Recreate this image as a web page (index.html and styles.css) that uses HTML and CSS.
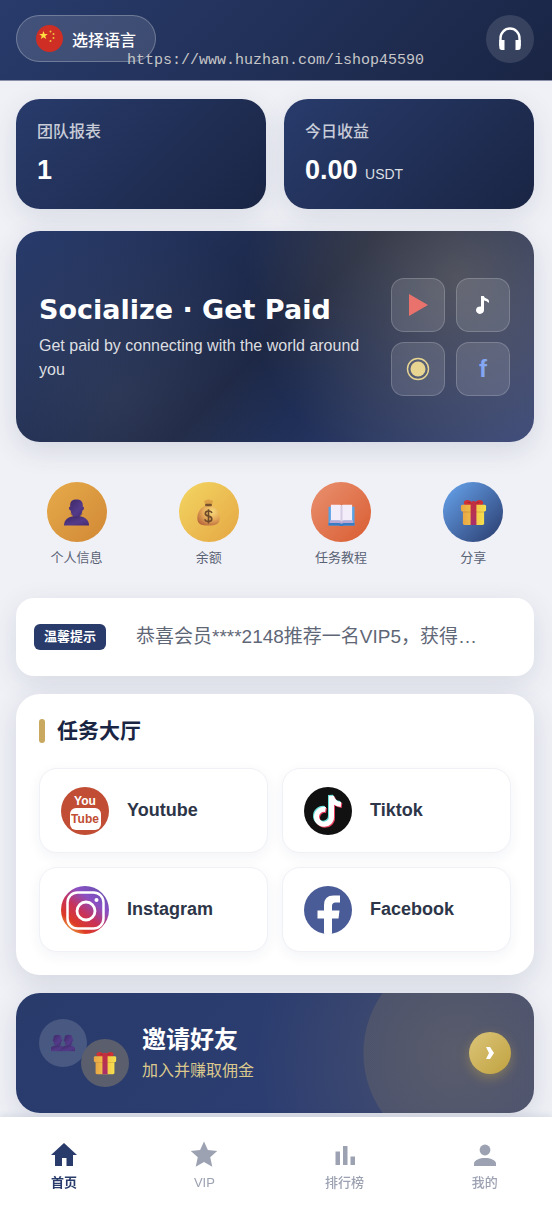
FILE: index.html
```html
<!DOCTYPE html>
<html lang="zh-CN">
<head>
<meta charset="utf-8">
<meta name="viewport" content="width=device-width, initial-scale=1">
<title>首页</title>
<link rel="stylesheet" href="styles.css">
</head>
<body>
	<!-- shared emoji and gradients -->
	<svg class="defs" width="0" height="0" aria-hidden="true">
		<defs>
			<linearGradient id="purple" x1="0" y1="0" x2="1" y2="1">
				<stop offset="0" stop-color="#3d2766"/>
				<stop offset="0.6" stop-color="#543b8a"/>
				<stop offset="1" stop-color="#432a70"/>
			</linearGradient>
			<linearGradient id="box" x1="0" y1="0" x2="1" y2="0">
				<stop offset="0" stop-color="#e9a545"/>
				<stop offset="1" stop-color="#f6e04d"/>
			</linearGradient>
			<linearGradient id="ribbon" x1="0" y1="0" x2="0" y2="1">
				<stop offset="0" stop-color="#c4303c"/>
				<stop offset="1" stop-color="#a8306b"/>
			</linearGradient>
			<radialGradient id="bag" cx="0.65" cy="0.3" r="0.8">
				<stop offset="0" stop-color="#f8dc7b"/>
				<stop offset="0.5" stop-color="#e6aa58"/>
				<stop offset="1" stop-color="#b7653b"/>
			</radialGradient>
			<linearGradient id="insta" x1="0.1" y1="1" x2="0.8" y2="0.1">
				<stop offset="0" stop-color="#f4c84c"/>
				<stop offset="0.25" stop-color="#dd3a26"/>
				<stop offset="0.5" stop-color="#c8325a"/>
				<stop offset="0.78" stop-color="#8a50c4"/>
				<stop offset="1" stop-color="#7150b5"/>
			</linearGradient>
		</defs>
		<symbol id="gift" viewBox="0 0 28 28">
			<path d="M14 6C11 0 5 0 4 3.500C3.500 6 6 7 14 7C22 7 24.500 6 24 3.500C23 0 17 0 14 6z" fill="#cf3236"/>
			<path d="M8 3.500c2 0 3.500 1 4.500 2.500M20 3.500c-2 0-3.500 1-4.500 2.500" stroke="#9e2334" fill="none"/>
			<rect x="3" y="11" width="22" height="16" rx="1.500" fill="url(#box)"/>
			<rect x="3" y="12" width="22" height="2" fill="#a86a32" opacity="0.35"/>
			<rect x="1" y="6" width="26" height="7" rx="1.500" fill="url(#box)"/>
			<path d="M11 6q0-4 3-4t3 4v21h-6z" fill="url(#ribbon)"/>
		</symbol>
		<symbol id="bust" viewBox="0 0 28 28">
			<path d="M1 27.500C1 21.500 6 18.500 11 18h6c5 .5 10 3.500 10 9.500z" fill="url(#purple)"/>
			<path d="M7.500 8C7 2.500 9.500.5 14 .5S21 2.500 20.500 8c1.800 0 1.800 3-.5 4c0 4-3 7-6 7s-6-3-6-7c-2.300-1-2.300-4-.5-4z" fill="url(#purple)"/>
			<path d="M8 15c2 5 10 5 12 0" stroke="#35215a" stroke-width="0.800" fill="none" opacity="0.500"/>
		</symbol>
		<symbol id="note" viewBox="0 0 48 48">
			<path d="M21.500 22.500A7.500 7.500 0 1 0 27.500 29.500V9Q28.500 16.500 37 17.500" fill="none" stroke="currentColor" stroke-width="5"/>
		</symbol>
	</svg>

	<header class="topbar">
		<button class="lang" type="button">
			<svg viewBox="0 0 27 27" width="27" height="27" aria-hidden="true">
				<circle cx="13.500" cy="13.500" r="13.500" fill="#cf2e25"/>
				<path d="M7.500 6l1.100 3.100h3.200l-2.600 1.900 1 3.100-2.700-1.900-2.700 1.900 1-3.100-2.600-1.900h3.200z" fill="#ffe040"/>
				<g fill="#eac53a">
					<circle cx="14.500" cy="6.500" r="1"/>
					<circle cx="17.500" cy="9" r="1"/>
					<circle cx="17.500" cy="13" r="1"/>
					<circle cx="14.500" cy="16" r="1"/>
				</g>
			</svg>
			<span>选择语言</span>
		</button>
		<button class="support" type="button" aria-label="客服">
			<svg viewBox="0 0 24 26" width="24" height="26" aria-hidden="true">
				<path d="M2.500 20v-8a9.500 9.500 0 0 1 19 0v8" fill="none" stroke="#fff" stroke-width="2.400"/>
				<path d="M1.300 14H6.500v10H4a2.700 2.700 0 0 1-2.700-2.700zM22.700 14H17.500v10H20a2.700 2.700 0 0 0 2.700-2.700z" fill="#fff"/>
			</svg>
		</button>
		<div class="site-url">https://www.huzhan.com/ishop45590</div>
	</header>

	<main>
		<section class="stats">
			<div class="stat">
				<div class="stat-label">团队报表</div>
				<div class="stat-value">1</div>
			</div>
			<div class="stat">
				<div class="stat-label">今日收益</div>
				<div class="stat-value">0.00 <small>USDT</small></div>
			</div>
		</section>

		<section class="hero">
			<div class="hero-text">
				<h1>Socialize · Get Paid</h1>
				<p>Get paid by connecting with the world around you</p>
			</div>
			<div class="hero-icons">
				<div class="tile">
					<svg viewBox="0 0 24 24" width="24" height="24"><path d="M3 1v22l19-11z" fill="#e9736c"/></svg>
				</div>
				<div class="tile">
					<svg viewBox="0 0 24 24" width="24" height="24"><path d="M10 3h2.800q.4 2 3.200 2.700q2.700 1 1.800 4.300q-1.800-2.200-4.800-2.400v9.400a4 3.700 0 1 1-3-3.400z" fill="#fff"/></svg>
				</div>
				<div class="tile">
					<svg viewBox="0 0 24 24" width="24" height="24"><circle cx="12" cy="12" r="10.500" fill="none" stroke="#e8d592" stroke-width="1.400"/><circle cx="12" cy="12" r="7.500" fill="#e8d592"/></svg>
				</div>
				<div class="tile tile-f">f</div>
			</div>
		</section>

		<nav class="quick">
			<a href="#profile">
				<span class="round amber"><svg width="27" height="27"><use href="#bust"/></svg></span>
				个人信息
			</a>
			<a href="#balance">
				<span class="round yellow">
					<svg viewBox="0 0 28 28" width="27" height="27">
						<path d="M11 6Q8 1 11 1.500Q14-.5 16.500 1.500Q20 0 17.500 6z" fill="#dca148"/>
						<path d="M10.500 7C4 10 2 16 2.500 21c.5 5 3.500 6.500 11.500 6.500S25 26 25.500 21C26 16 24 10 17.500 7z" fill="url(#bag)"/>
						<rect x="10.500" y="5" width="7" height="2.600" rx="1" fill="#76502c"/>
						<path d="M17.500 14.500q-.5-2-3.500-2t-3.300 2.600q0 2 3.300 2.700t3.400 2.900q0 2.600-3.400 2.600t-3.700-2.300M14 10.500v15" fill="none" stroke="#6f4a2a" stroke-width="1.700"/>
					</svg>
				</span>
				余额
			</a>
			<a href="#guide">
				<span class="round coral">
					<svg viewBox="0 0 28 28" width="27" height="27">
						<path d="M.5 8h27v19.500h-11q-2.500 1-5 0h-11z" fill="#58a2e4"/>
						<path d="M.5 25h27v2.500h-11q-2.500 1.300-5 0h-11z" fill="#387cc6"/>
						<path d="M2 22h24v3H16q-2 1.500-4 0H2z" fill="#b9a9d4"/>
						<path d="M3 6h9q2 0 2 1.500v16q0-1.500-3-1.500H3zM25 6h-9q-2 0-2 1.500v16q0-1.500 3-1.500h8z" fill="#f2edf9"/>
						<path d="M13 7h2v16h-2z" fill="#d6cce2"/>
					</svg>
				</span>
				任务教程
			</a>
			<a href="#share">
				<span class="round blue"><svg width="27" height="27"><use href="#gift"/></svg></span>
				分享
			</a>
		</nav>

		<section class="notice">
			<span class="badge">温馨提示</span>
			<p>恭喜会员****2148推荐一名VIP5，获得…</p>
		</section>

		<section class="tasks">
			<h2>任务大厅</h2>
			<div class="task-grid">
				<a class="task" href="#youtube">
					<svg viewBox="0 0 48 48" width="48" height="48" aria-hidden="true">
						<circle cx="24" cy="24" r="24" fill="#c04d34"/>
						<rect x="9" y="21" width="31" height="22" rx="6" fill="#fff"/>
						<text class="yt yt-top" x="24" y="18">You</text>
						<text class="yt yt-bottom" x="24" y="36">Tube</text>
					</svg>
					Youtube
				</a>
				<a class="task" href="#tiktok">
					<svg viewBox="0 0 48 48" width="48" height="48" aria-hidden="true">
						<circle cx="24" cy="24" r="24" fill="#111"/>
						<use href="#note" x="1" y="1" color="#e8405f"/>
						<use href="#note" x="-1" y="-1" color="#69e2dc"/>
						<use href="#note" color="#fff"/>
					</svg>
					Tiktok
				</a>
				<a class="task" href="#instagram">
					<svg viewBox="0 0 48 48" width="48" height="48" aria-hidden="true">
						<circle cx="24" cy="24" r="24" fill="url(#insta)"/>
						<rect x="6.500" y="6.500" width="36" height="36" rx="10" fill="none" stroke="#fff" stroke-width="2.500"/>
						<circle cx="25" cy="25" r="9" fill="none" stroke="#fff" stroke-width="2.800"/>
						<circle cx="35.500" cy="14" r="2" fill="#fff"/>
					</svg>
					Instagram
				</a>
				<a class="task" href="#facebook">
					<svg viewBox="0 0 48 48" width="48" height="48" aria-hidden="true">
						<circle cx="24" cy="24" r="24" fill="#4a5c97"/>
						<path d="M20 47.700V32.500h-6.500v-8H20V19q0-9.500 9.500-9.500h6.500v7h-4.500q-3.500 0-3.500 3.500v4.500h7.500l-1 8H28v15.200q-4 .6-8 0z" fill="#fff"/>
					</svg>
					Facebook
				</a>
			</div>
		</section>

		<a class="invite" href="#invite">
			<span class="bubbles">
				<span class="bubble people">
					<svg viewBox="0 0 30 28" width="24" height="22">
						<svg x="-3" y="3" width="22" height="22"><use href="#bust"/></svg>
						<svg x="11" y="3" width="22" height="22"><use href="#bust"/></svg>
					</svg>
				</span>
				<span class="bubble present"><svg width="24" height="24"><use href="#gift"/></svg></span>
			</span>
			<span class="invite-text">
				<strong>邀请好友</strong>
				<span>加入并赚取佣金</span>
			</span>
			<span class="go">
				<svg viewBox="0 0 10 14" width="10" height="14"><path d="M1 1h4l4 6-4 6H1l3-6z" fill="#fff"/></svg>
			</span>
		</a>
	</main>

	<nav class="tabbar">
		<a class="active" href="#home">
			<svg viewBox="0 0 28 28" width="28" height="28"><path d="M14 2L1 14h4v11h7v-8h4.500v8H23V14h4z"/></svg>
			首页
		</a>
		<a href="#vip">
			<svg viewBox="0 0 28 28" width="28" height="28"><path d="M14 .5l3.900 8.600 9.300.9-7 6.300 2.100 9.500L14 21l-8.300 4.800 2.100-9.500-7-6.300 9.300-.9z"/></svg>
			VIP
		</a>
		<a href="#rank">
			<svg viewBox="0 0 28 28" width="28" height="28"><path d="M4.500 10.500H9V24H4.500zM12 5h4.500v19H12zM19.500 15.500H24V24h-4.500z"/></svg>
			排行榜
		</a>
		<a href="#me">
			<svg viewBox="0 0 28 28" width="28" height="28"><circle cx="14" cy="9" r="5.400"/><path d="M3 25v-2.500c0-3.500 6-5.500 11-5.500s11 2 11 5.500v2.500z"/></svg>
			我的
		</a>
	</nav>
</body>
</html>
```

FILE: styles.css
```css
*
{
	box-sizing: border-box;
}

body
{
	margin: 0;
	background: #f0f1f6;
	font-family: "Liberation Sans", Arial, "Noto Sans CJK SC", sans-serif;
	color: #2d3548;
}

a
{
	color: inherit;
	text-decoration: none;
}

button
{
	font-family: inherit;
	padding: 0;
	cursor: pointer;
}

svg
{
	display: block;
	flex: none;
}

.defs
{
	position: absolute;
}

.topbar
{
	position: relative;
	display: flex;
	align-items: flex-start;
	justify-content: space-between;
	height: 81px;
	padding: 15px 18px 0 16px;
	border-bottom: 1px solid #8b8fa8;
	background: linear-gradient(135deg, #283b6b, #1a2544);
}

.lang
{
	display: flex;
	align-items: center;
	gap: 9px;
	height: 47px;
	padding: 0 19px;
	border: 1px solid rgba(255, 255, 255, 0.25);
	border-radius: 24px;
	background: rgba(255, 255, 255, 0.12);
	color: #fff;
	font-size: 16px;
	font-weight: 500;
}

.support
{
	display: flex;
	align-items: center;
	justify-content: center;
	width: 48px;
	height: 48px;
	border: 0;
	border-radius: 50%;
	background: rgba(255, 255, 255, 0.12);
}

/* site address printed over the header */
.site-url
{
	position: absolute;
	left: 127px;
	top: 52px;
	font-family: "Liberation Mono", monospace;
	font-size: 15px;
	line-height: 18px;
	color: #c6c6c8;
}

main
{
	display: flex;
	flex-direction: column;
	padding: 18px 18px 92px 16px;
}

.stats
{
	display: grid;
	grid-template-columns: 1fr 1fr;
	gap: 18px;
}

.stat
{
	height: 110px;
	padding: 20px 21px;
	border-radius: 24px;
	background: linear-gradient(135deg, #283b6b, #1a2544);
	box-shadow: 0 8px 28px rgba(40, 59, 107, 0.12);
	color: #fff;
}

.stat-label
{
	font-size: 16px;
	line-height: 26px;
	font-weight: 500;
	color: rgba(255, 255, 255, 0.75);
}

.stat-value
{
	margin-top: 8px;
	font-size: 27px;
	line-height: 34px;
	font-weight: bold;
}

.stat-value small
{
	font-size: 14px;
	font-weight: normal;
	color: rgba(255, 255, 255, 0.85);
}

.hero
{
	display: flex;
	align-items: center;
	gap: 20px;
	min-height: 211px;
	margin-top: 22px;
	padding: 23px 24px 23px 23px;
	border-radius: 24px;
	background:
		radial-gradient(circle at 85% 22%, rgba(220, 185, 110, 0.26), transparent 45%),
		radial-gradient(circle at 20% 80%, rgba(220, 210, 180, 0.08), transparent 40%),
		linear-gradient(135deg, #283b6b 0%, #1a2544 50%, #1e2d55 62%, #3b4a7c 100%);
	box-shadow: 0 8px 28px rgba(40, 59, 107, 0.14);
	color: #fff;
}

.hero-text
{
	flex: 1;
}

.hero h1
{
	margin: 0;
	font-family: "Arial Black", "DejaVu Sans", sans-serif;
	font-size: 27px;
	line-height: 36px;
	font-weight: 900;
	white-space: nowrap;
}

.hero p
{
	margin: 6px 0 0;
	font-size: 16px;
	line-height: 24px;
	color: rgba(255, 255, 255, 0.85);
}

.hero-icons
{
	display: grid;
	grid-template-columns: 54px 54px;
	gap: 10px 11px;
}

.tile
{
	display: flex;
	align-items: center;
	justify-content: center;
	height: 54px;
	border: 1px solid rgba(255, 255, 255, 0.18);
	border-radius: 13px;
	background: rgba(255, 255, 255, 0.12);
}

.tile-f
{
	font-size: 24px;
	font-weight: bold;
	color: #84a6f3;
}

.quick
{
	display: grid;
	grid-template-columns: repeat(4, 1fr);
	gap: 11px;
	margin-top: 40px;
}

.quick a
{
	display: flex;
	flex-direction: column;
	align-items: center;
	gap: 6px;
	font-size: 13px;
	line-height: 20px;
	color: #5a6275;
}

.round
{
	display: flex;
	align-items: center;
	justify-content: center;
	width: 60px;
	height: 60px;
	border-radius: 50%;
}

.amber
{
	background: linear-gradient(135deg, #e6ab4a, #d18835);
}

.yellow
{
	background: linear-gradient(135deg, #f3d663, #e5a643);
}

.coral
{
	background: linear-gradient(135deg, #e99170, #d95c31);
}

.blue
{
	background: linear-gradient(135deg, #68a6f0, #293a6c);
}

.notice
{
	display: flex;
	align-items: center;
	gap: 30px;
	height: 78px;
	margin-top: 30px;
	padding: 0 18px;
	border-radius: 18px;
	background: #fff;
	box-shadow: 0 8px 28px rgba(40, 59, 107, 0.12);
}

.badge
{
	flex: none;
	padding: 0 10px;
	border-radius: 6px;
	background: #293b6b;
	color: #fff;
	font-size: 13px;
	line-height: 26px;
	font-weight: bold;
}

.notice p
{
	margin: 0;
	overflow: hidden;
	white-space: nowrap;
	text-overflow: ellipsis;
	font-size: 19px;
	line-height: 28px;
	color: #5f6777;
}

.tasks
{
	margin-top: 18px;
	padding: 23px;
	border-radius: 24px;
	background: #fff;
	box-shadow: 0 8px 28px rgba(40, 59, 107, 0.14);
}

.tasks h2
{
	display: flex;
	align-items: center;
	gap: 12px;
	margin: 0 0 23px;
	font-size: 21px;
	line-height: 28px;
	color: #1a2544;
}

.tasks h2::before
{
	content: "";
	width: 6px;
	height: 24px;
	border-radius: 3px;
	background: #c9a85f;
}

.task-grid
{
	display: grid;
	grid-template-columns: 1fr 1fr;
	gap: 14px;
}

.task
{
	display: flex;
	align-items: center;
	gap: 18px;
	height: 85px;
	padding: 0 21px;
	border: 1px solid #f0f1f6;
	border-radius: 18px;
	background: #fff;
	box-shadow: 0 4px 14px rgba(40, 59, 107, 0.06);
	font-size: 18px;
	font-weight: bold;
}

.yt
{
	font-family: "Liberation Sans Narrow", "Liberation Sans", sans-serif;
	font-size: 12px;
	font-weight: bold;
	text-anchor: middle;
}

.yt-top
{
	fill: #fff;
}

.yt-bottom
{
	fill: #c04d34;
}

.invite
{
	display: flex;
	align-items: center;
	min-height: 120px;
	margin-top: 18px;
	padding: 0 23px;
	border-radius: 24px;
	background:
		radial-gradient(circle 104px at 451px 60px, rgba(212, 175, 85, 0.12) 103px, transparent 104px),
		radial-gradient(circle at 85% 50%, rgba(212, 175, 85, 0.16), transparent 45%),
		linear-gradient(135deg, #283b6b, #2f3f75);
	box-shadow: 0 8px 28px rgba(40, 59, 107, 0.14);
}

.bubbles
{
	display: flex;
	width: 90px;
	height: 68px;
}

.bubble
{
	display: flex;
	flex: none;
	align-items: center;
	justify-content: center;
	width: 48px;
	height: 48px;
	border-radius: 50%;
}

.people
{
	background: rgba(255, 255, 255, 0.15);
}

.present
{
	align-self: flex-end;
	margin-left: -6px;
	background: #5b5e6c;
}

.invite-text
{
	display: flex;
	flex: 1;
	flex-direction: column;
	margin-left: 13px;
	font-size: 16px;
	line-height: 26px;
	color: #dac88d;
}

.invite-text strong
{
	font-size: 24px;
	line-height: 36px;
	color: #fff;
}

.go
{
	display: flex;
	align-items: center;
	justify-content: center;
	width: 42px;
	height: 42px;
	border-radius: 50%;
	background: linear-gradient(135deg, #dcc57a, #c0a23f);
	box-shadow: 0 4px 12px rgba(201, 168, 76, 0.4);
}

.tabbar
{
	position: fixed;
	left: 0;
	right: 0;
	bottom: 0;
	display: grid;
	grid-template-columns: repeat(4, 1fr);
	gap: 12px;
	height: 88px;
	padding-right: 3px;
	background: #fff;
	box-shadow: 0 -2px 6px rgba(40, 59, 107, 0.1);
}

.tabbar a
{
	display: flex;
	flex-direction: column;
	align-items: center;
	gap: 4px;
	padding-top: 24px;
	font-size: 13px;
	line-height: 20px;
	font-weight: 500;
	color: #9ca2b2;
}

.tabbar a.active
{
	color: #293b6b;
	font-weight: bold;
}

.tabbar svg
{
	fill: currentColor;
}
```
